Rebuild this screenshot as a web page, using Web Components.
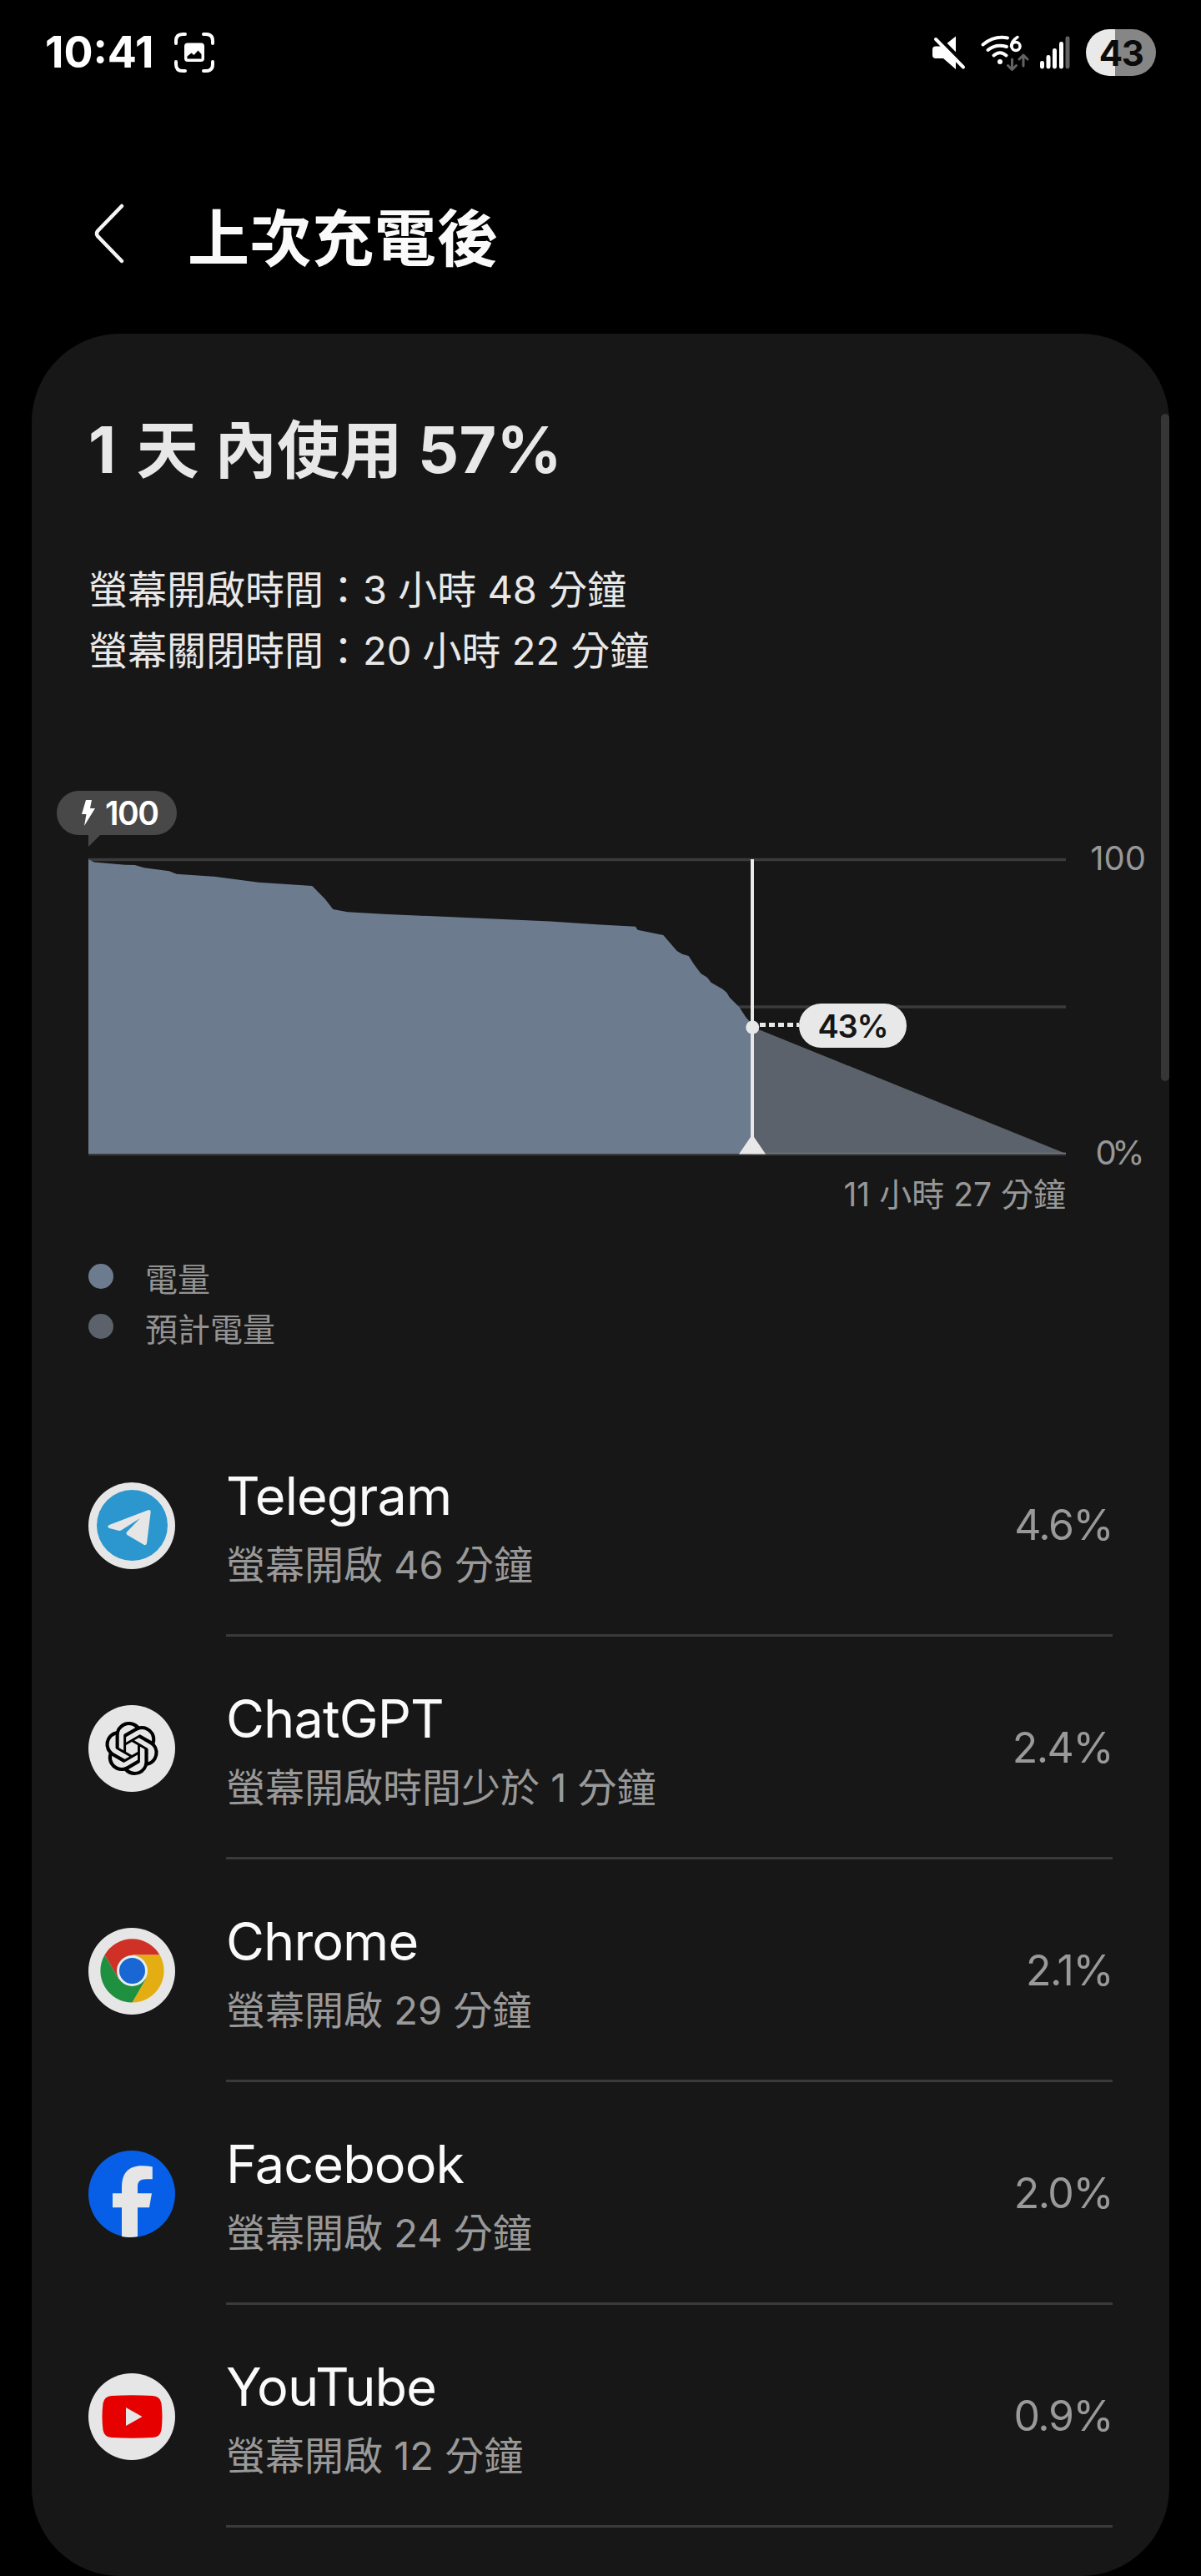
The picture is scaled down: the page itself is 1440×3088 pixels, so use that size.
<!DOCTYPE html>
<html lang="zh-Hant-TW">
<head>
<meta charset="utf-8">
<title>上次充電後</title>
<style>
   body {
      margin: 0;
      background-color: #000;
      color: #e8e8e8;
      font-family: Inter, "Noto Sans CJK TC", sans-serif;
   }
</style>
</head>
<body>
<battery-page></battery-page>

<script>
class StatusBar extends HTMLElement {
   constructor() {
      super();
      this.shadowDOM = this.attachShadow({ mode: 'open' });
   }

   connectedCallback() {
      this.shadowDOM.innerHTML = `
         <style>
            :host {
               display: flex;
               align-items: center;
               justify-content: space-between;
               height: 126px;
               padding: 0 54px 0 54px;
               box-sizing: border-box;
               color: #fff;
            }
            .side { display: flex; align-items: center; }
            .time {
               width: 155px;
               font-size: 52px;
               line-height: 60px;
               font-weight: 700;
               white-space: nowrap;
            }
            svg { display: block; }
            .battery {
               display: flex;
               align-items: center;
               justify-content: center;
               width: 84px;
               height: 56px;
               margin-left: 18px;
               border-radius: 28px;
               background: linear-gradient(90deg, #e9e9e9 35px, #868686 35px);
               color: #0b0b0b;
               font-size: 42px;
               font-weight: 700;
               letter-spacing: -1.5px;
            }
         </style>
         <div class="side">
            <span class="time">10:41</span>
            <svg width="48" height="48" viewBox="0 0 48 48">
               <path d="M2 13V10Q2 2 10 2H13M35 2H38Q46 2 46 10V13M46 35V38Q46 46 38 46H35M13 46H10Q2 46 2 38V35" fill="none" stroke="#fff" stroke-width="4" stroke-linecap="round"/>
               <path fill="#fff" fill-rule="evenodd" d="M15 12.500H32Q36 12.500 36 16.500V31Q36 35 32 35H16Q12 35 12 31V16.500Q12 12.500 16 12.500ZM15.500 31.500H32.500V26L28.500 21.500L23.500 27L20.500 24.500L15.500 28.500Z"/>
            </svg>
         </div>
         <div class="side">
            <svg width="168" height="56" viewBox="1116 35 168 56">
               <g fill="#fff">
                  <path d="M1134 53L1146 43.500V65Z"/>
                  <path d="M1122 55.500H1128L1146 73V83L1131 70H1122Q1118 70 1118 66V59.500Q1118 55.500 1122 55.500Z"/>
                  <circle cx="1199" cy="74" r="3"/>
                  <rect x="1247" y="73" width="5" height="9.500" rx="2.400"/>
                  <rect x="1254.500" y="66" width="5" height="16.500" rx="2.400"/>
                  <rect x="1262" y="58" width="5" height="24.500" rx="2.400"/>
                  <rect x="1270" y="50" width="5" height="32.500" rx="2.400"/>
               </g>
               <rect x="1277.500" y="43.500" width="5" height="39" rx="2.400" fill="#626262"/>
               <path d="M1125 44L1158 77.500" stroke="#000" stroke-width="4"/>
               <g fill="none" stroke="#fff" stroke-width="4" stroke-linecap="round">
                  <path d="M1122 47L1155 80.500"/>
                  <path d="M1178.500 53.500Q1192 42.500 1208 45.500"/>
                  <path d="M1184.500 60Q1194 52 1207 56"/>
                  <path d="M1191.500 66.500Q1199 60 1206.500 66.500"/>
                  <path d="M1220 44.500Q1213 49 1212.500 55.500" stroke-width="3.500"/>
                  <circle cx="1218" cy="55.500" r="5" stroke-width="3.500"/>
               </g>
               <path d="M1213.500 71V82.500M1208.500 78.500L1213.500 83.500L1218.500 78.500M1227 79V67M1222 71L1227 66L1232 71" fill="none" stroke="#626262" stroke-width="3" stroke-linecap="round" stroke-linejoin="round"/>
            </svg>
            <span class="battery">43</span>
         </div>
      `;
   }
}

class PageHeader extends HTMLElement {
   constructor() {
      super();
      this.shadowDOM = this.attachShadow({ mode: 'open' });
   }

   connectedCallback() {
      this.shadowDOM.innerHTML = `
         <style>
            :host {
               display: flex;
               align-items: center;
               height: 274px;
               padding: 0 109px;
               box-sizing: border-box;
            }
            svg { display: block; margin-top: 34px; }
            h1 {
               margin: 46px 0 0 74px;
               font-size: 74px;
               line-height: 90px;
               font-weight: 700;
               letter-spacing: 0.6px;
               color: #fafafa;
            }
         </style>
         <svg width="42" height="74" viewBox="0 0 42 74">
            <path d="M37 4L8 34Q6 37 8 40L37 70" fill="none" stroke="#f5f5f5" stroke-width="4.500" stroke-linecap="round" stroke-linejoin="round"/>
         </svg>
         <h1><slot></slot></h1>
      `;
   }
}

class UsageSummary extends HTMLElement {
   constructor() {
      super();
      this.shadowDOM = this.attachShadow({ mode: 'open' });
   }

   connectedCallback() {
      this.shadowDOM.innerHTML = `
         <style>
            :host { display: block; padding: 94px 68px 0; white-space: nowrap; }
            h2 {
               margin: 0 0 86px;
               height: 90px;
               font-size: 75px;
               line-height: 90px;
               font-weight: 700;
               letter-spacing: 0.3px;
            }
            div { font-size: 47px; line-height: 73px; }
         </style>
         <h2><slot name="title"></slot></h2>
         <div><slot name="on"></slot></div>
         <div><slot name="off"></slot></div>
      `;
   }
}

class BatteryChart extends HTMLElement {
   constructor() {
      super();
      this.shadowDOM = this.attachShadow({ mode: 'open' });
   }

   connectedCallback() {
      this.shadowDOM.innerHTML = `
         <style>
            :host {
               display: block;
               position: relative;
               height: 540px;
               margin-top: 124px;
               color: #979797;
               font-size: 40px;
               line-height: 50px;
               white-space: nowrap;
            }
            svg { display: block; }
            span { position: absolute; }
            .charged {
               left: 30px;
               top: 8px;
               width: 144px;
               height: 53px;
               line-height: 54px;
               padding-left: 58px;
               box-sizing: border-box;
               border-radius: 27px;
               background-color: #484848;
               color: #fff;
               font-size: 39px;
               font-weight: 600;
               letter-spacing: -1.5px;
            }
            .charged svg { position: absolute; left: 30px; top: 11px; }
            .now {
               left: 920px;
               top: 263px;
               width: 129px;
               height: 53px;
               line-height: 55px;
               border-radius: 27px;
               background-color: #e8e8e8;
               color: #151515;
               text-align: center;
               font-size: 38px;
               font-weight: 600;
               letter-spacing: -1.2px;
            }
            .full { right: 28px; top: 64px; }
            .empty { right: 35px; top: 417px; letter-spacing: -5.5px; }
            .left { right: 124px; top: 467px; font-size: 39px; }
         </style>
         <svg width="1364" height="540" viewBox="38 940 1364 540">
            <path d="M106 1030.500H1278M106 1207H1278M106 1383.500H1278" stroke="#3b3b3b" stroke-width="3.500"/>
            <path d="M106 1383V1030L112.700 1033.500L150 1036.700L161.700 1037L173 1040.300L203 1044.300L211.700 1047.700L256.700 1050.700L310 1057.700L374.300 1062L390 1078L399.300 1090L416.700 1093.300L460 1095.700L660 1104.500L720 1108.500L762 1110.700L764.500 1114.700L795.300 1121L811.700 1140L818 1143.700L825.700 1146L832.600 1156.700L840.600 1167.300L848 1171.700L852.500 1177.700L866.500 1185.700L871.400 1190L875 1196L886.400 1207.300L894 1219L902 1228V1383Z" fill="#6d7b8f"/>
            <path d="M902 1231L1278 1383H902Z" fill="#5c626b"/>
            <path d="M902 1382.500H1278" stroke="#75787e" stroke-width="1.500"/>
            <path d="M106 1000V1015L121 1000Z" fill="#484848"/>
            <path d="M910 1228.500H958" stroke="#e8e8e8" stroke-width="5" stroke-dasharray="7 4" stroke-dashoffset="-1"/>
            <path d="M902 1030V1383" stroke="#e8e8e8" stroke-width="4"/>
            <circle cx="902.300" cy="1231.500" r="8" fill="#e8e8e8"/>
            <path d="M902 1360L918 1383.500H886Z" fill="#e8e8e8"/>
         </svg>
         <span class="charged"><svg width="16" height="31" viewBox="0 0 16 31"><path d="M5 0H12L10 10H16L3 31L5.500 17H0Z" fill="#fff"/></svg>100</span>
         <span class="now">43%</span>
         <span class="full">100</span>
         <span class="empty">0%</span>
         <span class="left">11 小時 27 分鐘</span>
      `;
   }
}

class ChartLegend extends HTMLElement {
   constructor() {
      super();
      this.shadowDOM = this.attachShadow({ mode: 'open' });
   }

   connectedCallback() {
      this.shadowDOM.innerHTML = `
         <style>
            :host {
               display: flex;
               align-items: center;
               gap: 38px;
               height: 60px;
               padding-left: 68px;
               font-size: 39px;
               color: #939393;
            }
            i {
               width: 30px;
               height: 30px;
               border-radius: 50%;
               background-color: var(--dot);
            }
            span { line-height: 52px; padding-top: 8px; }
         </style>
         <i></i><span><slot></slot></span>
      `;
   }
}

const icons = {
   telegram: `
      <circle cx="52" cy="52" r="52" fill="#e6e6e6"/>
      <circle cx="52.500" cy="51.500" r="42.500" fill="#2b97ce"/>
      <path d="M25 51L71.500 33.200Q75 32.200 74.700 35.500L70 73Q69 76.500 66 74.500L46.500 63Q44.500 61 46.500 59L62 43L40 57Q38 58.200 36 57.800L25 55Q21.500 53 25 51Z" fill="#e6e6e6"/>`,
   chatgpt: `
      <circle cx="52" cy="52" r="52" fill="#e6e6e6"/>
      <path transform="translate(20 20) scale(2.670)" d="M22.282 9.821a5.985 5.985 0 0 0-.516-4.911 6.046 6.046 0 0 0-6.510-2.900A6.065 6.065 0 0 0 4.981 4.182a5.985 5.985 0 0 0-3.998 2.900 6.046 6.046 0 0 0 .743 7.097 5.980 5.980 0 0 0 .511 4.911 6.051 6.051 0 0 0 6.515 2.900A5.985 5.985 0 0 0 13.260 24a6.056 6.056 0 0 0 5.772-4.206 5.989 5.989 0 0 0 3.998-2.900 6.056 6.056 0 0 0-.748-7.073zm-9.022 12.608a4.476 4.476 0 0 1-2.876-1.041l.142-.080 4.778-2.758a.795.795 0 0 0 .393-.681v-6.737l2.020 1.169a.071.071 0 0 1 .038.062v5.583a4.504 4.504 0 0 1-4.495 4.494zm-9.661-4.125a4.471 4.471 0 0 1-.535-3.014l.142.085 4.783 2.758a.771.771 0 0 0 .781 0l5.843-3.369v2.332a.080.080 0 0 1-.033.062L9.740 19.950a4.499 4.499 0 0 1-6.141-1.646zM2.341 7.896a4.485 4.485 0 0 1 2.366-1.973V11.600a.766.766 0 0 0 .388.677l5.814 3.354-2.020 1.169a.076.076 0 0 1-.071 0l-4.830-2.787A4.504 4.504 0 0 1 2.341 7.872zm16.596 3.856L13.104 8.364 15.119 7.200a.076.076 0 0 1 .071 0l4.830 2.791a4.494 4.494 0 0 1-.677 8.104v-5.677a.790.790 0 0 0-.407-.667zm2.011-3.023l-.142-.085-4.774-2.782a.776.776 0 0 0-.785 0L9.409 9.230V6.897a.066.066 0 0 1 .028-.062l4.830-2.787a4.499 4.499 0 0 1 6.680 4.660zM8.307 12.863l-2.020-1.164a.080.080 0 0 1-.038-.057V6.074a4.499 4.499 0 0 1 7.376-3.454l-.142.081L8.704 5.459a.795.795 0 0 0-.393.681zm1.098-2.365l2.602-1.500 2.607 1.500v2.999l-2.597 1.500-2.607-1.500Z"/>`,
   chrome: `
      <circle cx="52" cy="52" r="52" fill="#e6e6e6"/>
      <g transform="translate(52.500 51.500)">
         <path d="M-33 -19A38 38 0 0 1 33 -19H0L-16.500 9.500Z" fill="#cf3127"/>
         <path d="M33 -19A38 38 0 0 1 0 38L16.500 9.500L0 -19Z" fill="#e4ae12"/>
         <path d="M0 38A38 38 0 0 1 -33 -19L-16.500 9.500H16.500Z" fill="#1f8f40"/>
         <circle r="18.500" fill="#e6eef5"/>
         <circle r="15.500" fill="#1867d2"/>
      </g>`,
   facebook: `
      <circle cx="52" cy="52" r="52" fill="#065fe6"/>
      <path d="M40 103V68.300H29V51.300H40V44C40 27 48 18.300 64 18.300C70 18.300 76 19.300 76.800 19.500V34.300H71C62 34 59 37 59 43V51.300H76L73 68.300H59V103Q49.500 105 40 103Z" fill="#e6e6e6"/>`,
   youtube: `
      <circle cx="52" cy="52" r="52" fill="#e6e6e6"/>
      <path d="M28 27Q52.500 25.500 77 27Q86 27.500 87.500 36Q89.500 52 87.500 68Q86 76.500 77 77Q52.500 78.500 28 77Q19 76.500 17.500 68Q15.500 52 17.500 36Q19 27.500 28 27Z" fill="#e60000"/>
      <path d="M45 41V63L64.500 52Z" fill="#e6e6e6"/>`
};

class AppUsage extends HTMLElement {
   constructor() {
      super();
      this.shadowDOM = this.attachShadow({ mode: 'open' });
   }

   connectedCallback() {
      this.shadowDOM.innerHTML = `
         <style>
            :host {
               display: flex;
               height: 267px;
               padding: 0 68px;
               white-space: nowrap;
            }
            .icon { display: block; margin: 82px 61px 0 0; }
            .row {
               flex: 1;
               display: flex;
               justify-content: space-between;
               box-sizing: border-box;
               border-bottom: 3px solid #3a3a3a;
            }
            .texts { padding-top: 57px; }
            .name {
               font-size: 63px;
               line-height: 82px;
               letter-spacing: -0.9px;
               color: #fafafa;
            }
            .time { font-size: 47px; line-height: 83px; color: #999; }
            .percent {
               margin-top: 103px;
               font-size: 50px;
               line-height: 61px;
               letter-spacing: -1.5px;
               color: #999;
            }
         </style>
         <svg class="icon" width="104" height="104" viewBox="0 0 104 104">${icons[this.getAttribute('icon')]}</svg>
         <div class="row">
            <div class="texts">
               <div class="name">${this.getAttribute('name')}</div>
               <div class="time"><slot></slot></div>
            </div>
            <div class="percent">${this.getAttribute('percent')}</div>
         </div>
      `;
   }
}

class BatteryPage extends HTMLElement {
   constructor() {
      super();
      this.shadowDOM = this.attachShadow({ mode: 'open' });
   }

   connectedCallback() {
      this.shadowDOM.innerHTML = `
         <style>
            :host {
               display: block;
               width: 1440px;
               height: 3088px;
               overflow: hidden;
            }
            main {
               position: relative;
               height: 2688px;
               margin: 0 38px;
               border-radius: 106px;
               background-color: #171717;
            }
            b { font-size: 77px; font-weight: 700; }
            b.days { margin-right: 6px; }
            .list { margin-top: 75px; }
            .legend { padding-top: 20px; }
            .scroll {
               position: absolute;
               right: 0;
               top: 96px;
               width: 10px;
               height: 800px;
               border-radius: 5px;
               background-color: #363636;
            }
         </style>
         <status-bar></status-bar>
         <page-header>上次充電後</page-header>
         <main>
            <usage-summary>
               <span slot="title"><b class="days">1</b> 天 內使用 <b>57%</b></span>
               <span slot="on">螢幕開啟時間：3 小時 48 分鐘</span>
               <span slot="off">螢幕關閉時間：20 小時 22 分鐘</span>
            </usage-summary>
            <battery-chart></battery-chart>
            <div class="legend">
               <chart-legend style="--dot: #6d7b8f">電量</chart-legend>
               <chart-legend style="--dot: #5c626b">預計電量</chart-legend>
            </div>
            <div class="list">
               <app-usage icon="telegram" name="Telegram" percent="4.6%">螢幕開啟 46 分鐘</app-usage>
               <app-usage icon="chatgpt" name="ChatGPT" percent="2.4%">螢幕開啟時間少於 1 分鐘</app-usage>
               <app-usage icon="chrome" name="Chrome" percent="2.1%">螢幕開啟 29 分鐘</app-usage>
               <app-usage icon="facebook" name="Facebook" percent="2.0%">螢幕開啟 24 分鐘</app-usage>
               <app-usage icon="youtube" name="YouTube" percent="0.9%">螢幕開啟 12 分鐘</app-usage>
            </div>
            <div class="scroll"></div>
         </main>
      `;
   }
}

customElements.define('status-bar', StatusBar);
customElements.define('page-header', PageHeader);
customElements.define('usage-summary', UsageSummary);
customElements.define('battery-chart', BatteryChart);
customElements.define('chart-legend', ChartLegend);
customElements.define('app-usage', AppUsage);
customElements.define('battery-page', BatteryPage);
</script>
</body>
</html>
